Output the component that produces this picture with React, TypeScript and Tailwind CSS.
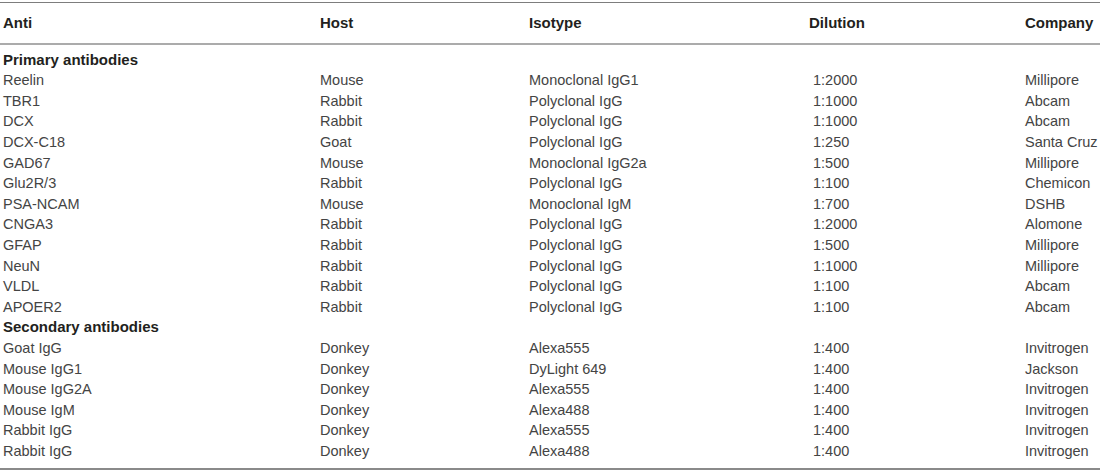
import type { FC } from "react";

type Row = [string, string, string, string, string];

const primary: Row[] = [
    ["Reelin", "Mouse", "Monoclonal IgG1", "1:2000", "Millipore"],
    ["TBR1", "Rabbit", "Polyclonal IgG", "1:1000", "Abcam"],
    ["DCX", "Rabbit", "Polyclonal IgG", "1:1000", "Abcam"],
    ["DCX-C18", "Goat", "Polyclonal IgG", "1:250", "Santa Cruz"],
    ["GAD67", "Mouse", "Monoclonal IgG2a", "1:500", "Millipore"],
    ["Glu2R/3", "Rabbit", "Polyclonal IgG", "1:100", "Chemicon"],
    ["PSA-NCAM", "Mouse", "Monoclonal IgM", "1:700", "DSHB"],
    ["CNGA3", "Rabbit", "Polyclonal IgG", "1:2000", "Alomone"],
    ["GFAP", "Rabbit", "Polyclonal IgG", "1:500", "Millipore"],
    ["NeuN", "Rabbit", "Polyclonal IgG", "1:1000", "Millipore"],
    ["VLDL", "Rabbit", "Polyclonal IgG", "1:100", "Abcam"],
    ["APOER2", "Rabbit", "Polyclonal IgG", "1:100", "Abcam"],
];

const secondary: Row[] = [
    ["Goat IgG", "Donkey", "Alexa555", "1:400", "Invitrogen"],
    ["Mouse IgG1", "Donkey", "DyLight 649", "1:400", "Jackson"],
    ["Mouse IgG2A", "Donkey", "Alexa555", "1:400", "Invitrogen"],
    ["Mouse IgM", "Donkey", "Alexa488", "1:400", "Invitrogen"],
    ["Rabbit IgG", "Donkey", "Alexa555", "1:400", "Invitrogen"],
    ["Rabbit IgG", "Donkey", "Alexa488", "1:400", "Invitrogen"],
];

const cols = "grid grid-cols-[320px_209px_280px_216px_1fr]";

const DataRow: FC<{ row: Row }> = ({ row }) => (
    <div className={`${cols} h-[20.6px] items-center whitespace-nowrap`}>
        <span className="pl-[3px]">{row[0]}</span>
        <span>{row[1]}</span>
        <span>{row[2]}</span>
        <span className="pl-[4px]">{row[3]}</span>
        <span>{row[4]}</span>
    </div>
);

const SectionRow: FC<{ label: string }> = ({ label }) => (
    <div className="flex h-[20.6px] items-center pl-[3px] text-[15px] font-bold text-[#231f20]">
        {label}
    </div>
);

export default function App() {
    return (
        <div className="h-[471px] w-[1100px] bg-white font-['Liberation_Sans',Arial,sans-serif] text-[14.5px] text-[#444]">
            <div className="h-[2px]" />
            <div className="border-t border-[#7d7d7d]" />

            {/* Header */}
            <div className={`${cols} h-[40px] items-center text-[15px] font-bold text-[#231f20]`}>
                <span className="pl-[3px]">Anti</span>
                <span>Host</span>
                <span>Isotype</span>
                <span>Dilution</span>
                <span>Company</span>
            </div>
            <div className="border-t-2 border-[#ababab]" />

            <div className="pt-[4.7px] pb-[6px]">
                <SectionRow label="Primary antibodies" />
                {primary.map((r, i) => (
                    <DataRow key={`p${i}`} row={r} />
                ))}
                <SectionRow label="Secondary antibodies" />
                {secondary.map((r, i) => (
                    <DataRow key={`s${i}`} row={r} />
                ))}
            </div>
            <div className="border-t-2 border-[#8a8a8a]" />
        </div>
    );
}
